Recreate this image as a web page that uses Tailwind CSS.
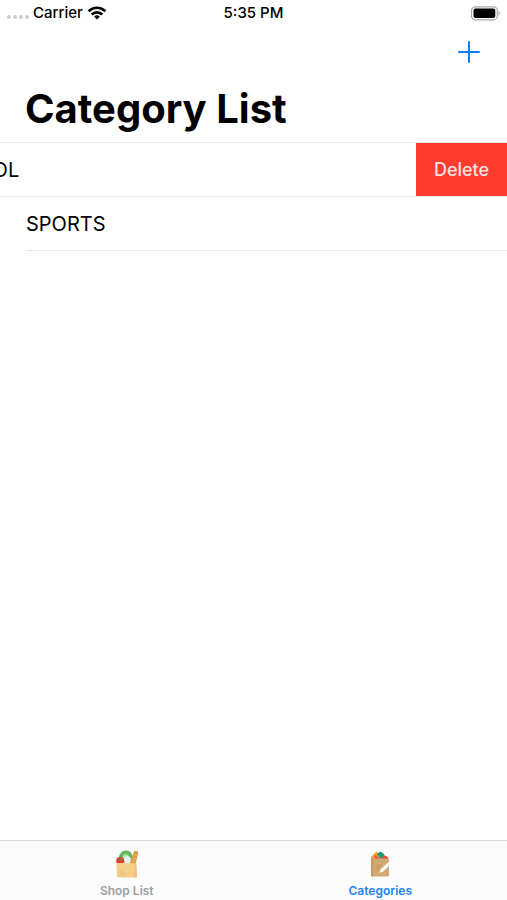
<!DOCTYPE html>
<html lang="en">
<head>
<meta charset="utf-8">
<meta name="viewport" content="width=device-width, initial-scale=1">
<title>Category List</title>
<script src="https://cdn.jsdelivr.net/npm/@tailwindcss/browser@4"></script>
</head>
<body class="flex h-screen flex-col overflow-hidden bg-white font-['Inter','Liberation_Sans',sans-serif] text-black">
  <div class="grid h-[26px] shrink-0 grid-cols-3 items-center px-[7px] text-[15px] font-medium">
    <div class="flex items-center">
      <div class="flex gap-[2px] pt-2">
        <span class="size-1 rounded-full bg-[#cdcdcd]"></span>
        <span class="size-1 rounded-full bg-[#cdcdcd]"></span>
        <span class="size-1 rounded-full bg-[#cdcdcd]"></span>
        <span class="size-1 rounded-full bg-[#cdcdcd]"></span>
      </div>
      <span class="ml-1">Carrier</span>
      <svg class="ml-1 h-[14px] w-5" viewBox="0 0 20 14" fill="none" stroke="#000" stroke-width="2.7" aria-hidden="true">
        <path d="M1.6 5.200a12 12 0 0 1 16.800 0"/>
        <path d="M4.700 8.500a7.600 7.600 0 0 1 10.600 0"/>
        <path d="M10 13.600 7.100 10.700a4.200 4.200 0 0 1 5.800 0z" fill="#000" stroke="none"/>
      </svg>
    </div>
    <span class="text-center">5:35 PM</span>
    <svg class="h-[15px] w-[30px] justify-self-end" viewBox="0 0 30 15" aria-hidden="true">
      <rect x="1.500" y=".8" width="25.800" height="13" rx="3.800" fill="#fff" stroke="#a6a6a6" stroke-width="1.200"/>
      <rect x="3.500" y="2.600" width="21.800" height="9.400" rx="2" fill="#000"/>
      <path d="M28.500 5.100c1.700.5 1.700 3.900 0 4.400z" fill="#a6a6a6"/>
    </svg>
  </div>

  <header class="shrink-0">
    <div class="flex h-[52px] items-center justify-end pr-[26px]">
      <button type="button" aria-label="Add category" class="size-6">
        <svg class="size-6" viewBox="0 0 24 24" stroke="#0a7cff" stroke-width="2" stroke-linecap="round" aria-hidden="true"><path d="M12 2v20M2 12h20"/></svg>
      </button>
    </div>
    <h1 class="h-16 pl-[25px] text-[40px] leading-[62px] font-bold">Category List</h1>
  </header>

  <main class="grow overflow-hidden">
    <ul class="border-t border-[#e9e9eb]">
      <li class="flex h-[54px] justify-end border-b border-[#e9e9eb]">
        <div class="flex w-full shrink-0 items-center bg-white pl-[26px] text-xl">SCHOOL</div>
        <button type="button" class="w-[91px] shrink-0 bg-[#ff3b30] text-lg font-medium text-white/85">Delete</button>
      </li>
      <li class="ml-[26px] flex h-[54px] items-center border-b border-[#e9e9eb] text-xl">SPORTS</li>
    </ul>
  </main>

  <nav class="grid h-[60px] shrink-0 grid-cols-2 border-t border-[#d9d9d9] bg-[#fcfcfc] text-xs font-semibold">
    <a href="#shop" class="flex flex-col items-center gap-1 pt-2 text-[#a0a0a0]">
      <svg class="h-[30px] w-[26px]" viewBox="0 0 26 30" aria-hidden="true">
        <path d="M5 13C4 6 7 1.500 12 1.500S20 6 19 14z" fill="#62b95c"/>
        <path d="M9 12c-1-4 0-6 2-7 3 0 5 3 5 8z" fill="#b8e0a4"/>
        <path d="M10 8.500l4-2 3 3-1 6h-5z" fill="#e2f3f8"/>
        <path d="M16 15 19.500 3.500c1-2.600 5-2.200 4.700.8L21.500 15z" fill="#dc9a42"/>
        <path d="m19.500 5.500 3.500 1.500m-4.500 1.500 3.500 1.500m-4.500 1.500 3.500 1.200" stroke="#eebb70" stroke-width=".9"/>
        <circle cx="6.200" cy="12" r="4" fill="#df3e31"/>
        <path d="M3.500 9.500 6 10.500 7.500 7.500 8 10l2 .5-3 1z" fill="#5e8f38"/>
        <path d="M2.500 14h19.700l.8 13q0 1.500-1.500 1.500h-17Q3 28.500 3 27z" fill="#f5cf88"/>
        <path d="M20 14h2.200l.8 13q0 1.500-1.500 1.500H20z" fill="#f0c47b"/>
        <path d="M5.500 22h3m-3 2h5m-5 2h7" stroke="#e0b772" stroke-width=".8"/>
      </svg>
      <span>Shop List</span>
    </a>
    <a href="#categories" aria-current="page" class="flex flex-col items-center gap-1 pt-2 text-[#2484f4]">
      <svg class="h-[30px] w-[26px]" viewBox="0 0 26 30" aria-hidden="true">
        <path d="M4.500 9V7.500L9.500 2.500l7 8z" fill="#f5a02c"/>
        <path d="M10 5.500q3-5 6.500-1l2 4-4 2.500z" fill="#249b78"/>
        <path d="m8 6 4 3 2 3H7z" fill="#e94a38"/>
        <path d="m13.500 10 4-3.500q3.500.5 4 3.500v1z" fill="#e94a38"/>
        <path d="M4 9l1.500-1 3 1.500h12.500l1 2v14.500q0 1.500-1.500 1.500H5.500q-1.500 0-1.500-1.500z" fill="#d2a970"/>
        <path d="M4 9l1.500-1 .8 1.500v18h-.8q-1.500 0-1.500-1.500z" fill="#c99b60"/>
        <path d="M9 16h6m-6 2.300h5m-5 2.300h3" stroke="#bf935a" stroke-width=".9"/>
        <path d="M13.500 20.500 21.500 13l2 2.500-7.500 7.200-3.500 1z" fill="#fff"/>
      </svg>
      <span>Categories</span>
    </a>
  </nav>
</body>
</html>
